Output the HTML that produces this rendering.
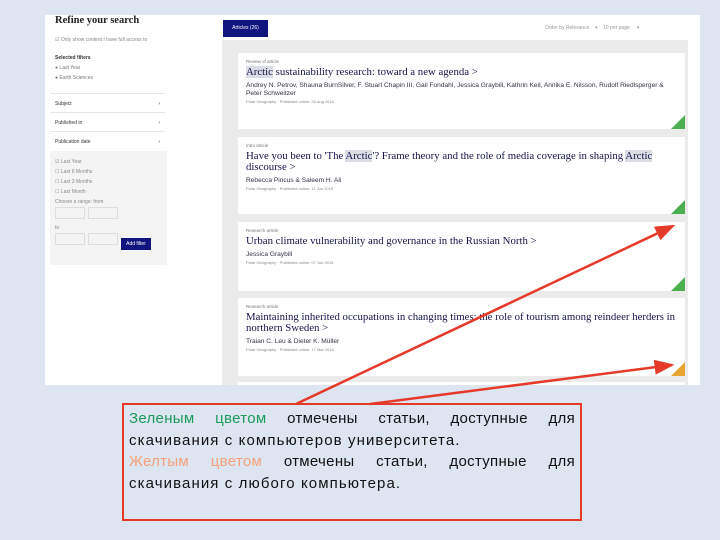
<!DOCTYPE html>
<html><head><meta charset="utf-8"><style>
*{margin:0;padding:0;box-sizing:border-box}
body{width:720px;height:540px;background:#dde5f1;position:relative;overflow:hidden;font-family:"Liberation Sans",sans-serif}
.shot{position:absolute;left:45px;top:15px;width:655px;height:370px;background:#fff;overflow:hidden}
.left{position:absolute;left:0;top:0;width:177px;height:370px;background:#fff;font-size:5px;color:#333}
.right{position:absolute;left:177px;top:25px;width:466px;height:345px;background:#ebebeb}
.tab{position:absolute;left:178px;top:5px;width:45px;height:17px;background:#10147e;color:#fff;font-size:5px;line-height:17px;text-align:center}
.card{position:absolute;left:193px;width:447px;background:#fff;padding:6px 8px;color:#1a1a5e}
.card .t{font-size:4.5px;color:#777}
.card h3{font-family:"Liberation Serif",serif;font-weight:normal;font-size:10.8px;color:#14144a;margin:3px 0 4px;line-height:11px}
.card .a{font-size:6.6px;color:#334;line-height:8px}
.card .m{font-size:4px;color:#888;margin-top:1px}
.hl{background:#dcdce4}
.tri{position:absolute;right:0;bottom:0;width:0;height:0;border-left:14px solid transparent;border-bottom:14px solid #4caf50}
.tri.y{border-bottom-color:#e8a531}
.box{position:absolute;left:122px;top:403px;width:460px;height:118px;border:2px solid #e5392a;padding:3px 5px;font-family:"Liberation Sans","DejaVu Sans",sans-serif;font-size:15px;letter-spacing:1.1px;line-height:21.5px;color:#111}
.j{text-align:justify;text-align-last:justify;white-space:nowrap;letter-spacing:0.3px}
.sel{height:12px;border:1px solid #ddd;display:inline-block;width:30px;margin-right:3px}
</style></head><body>
<div class="shot">
 <div class="left">
  <div style="position:absolute;left:10px;top:0px;font-family:'Liberation Serif',serif;font-weight:bold;font-size:10.5px;color:#222">Refine your search</div>
  <div style="position:absolute;left:10px;top:22px;color:#888">☑ Only show content I have full access to</div>
  <div style="position:absolute;left:10px;top:40px;font-weight:bold">Selected filters</div>
  <div style="position:absolute;left:10px;top:50px;color:#777">● Last Year</div>
  <div style="position:absolute;left:10px;top:60px;color:#777">● Earth Sciences</div>
  <div style="position:absolute;left:5px;top:78px;width:115px;border-top:1px solid #e6e6e6;padding:7px 5px">Subject<span style="float:right">›</span></div>
  <div style="position:absolute;left:5px;top:97px;width:115px;border-top:1px solid #e6e6e6;padding:7px 5px">Published in<span style="float:right">›</span></div>
  <div style="position:absolute;left:5px;top:116px;width:115px;border-top:1px solid #e6e6e6;padding:7px 5px">Publication date<span style="float:right">›</span></div>
  <div style="position:absolute;left:5px;top:136px;width:117px;height:114px;background:#f4f4f4;padding:6px 5px;color:#888;line-height:10px">
   ☑ Last Year<br>☐ Last 6 Months<br>☐ Last 3 Months<br>☐ Last Month<br>Choose a range: from<br>
   <span class="sel"></span><span class="sel"></span><br>to<br>
   <span class="sel"></span><span class="sel"></span><span style="display:inline-block;width:30px;height:12px;background:#10147e;color:#fff;text-align:center;line-height:12px">Add filter</span>
  </div>
 </div>
 <div style="position:absolute;left:177px;top:0;width:466px;height:25px;background:#fff"></div>
 <div class="right"></div>
 <div class="tab">Articles (26)</div>
 <div style="position:absolute;left:500px;top:10px;font-size:5px;color:#999">Order by Relevance &nbsp;&nbsp; ▾ &nbsp;&nbsp; 10 per page &nbsp;&nbsp;&nbsp; ▾</div>
 <div class="card" style="top:38px;height:76px"><div class="t">Review of article</div><h3><span class="hl">Arctic</span> sustainability research: toward a new agenda &gt;</h3><div class="a">Andrey N. Petrov, Shauna BurnSilver, F. Stuart Chapin III, Gail Fondahl, Jessica Graybill, Kathrin Keil, Annika E. Nilsson, Rudolf Riedlsperger &amp; Peter Schweitzer</div><div class="m">Polar Geography · Published online: 25 Aug 2016</div><div class="tri"></div></div>
 <div class="card" style="top:122px;height:77px"><div class="t">Intro article</div><h3>Have you been to 'The <span class="hl">Arctic</span>'? Frame theory and the role of media coverage in shaping <span class="hl">Arctic</span> discourse &gt;</h3><div class="a">Rebecca Pincus &amp; Saleem H. Ali</div><div class="m">Polar Geography · Published online: 11 Jun 2016</div><div class="tri"></div></div>
 <div class="card" style="top:207px;height:69px"><div class="t">Research article</div><h3>Urban climate vulnerability and governance in the Russian North &gt;</h3><div class="a">Jessica Graybill</div><div class="m">Polar Geography · Published online: 07 Jun 2016</div><div class="tri"></div></div>
 <div class="card" style="top:283px;height:78px"><div class="t">Research article</div><h3>Maintaining inherited occupations in changing times: the role of tourism among reindeer herders in northern Sweden &gt;</h3><div class="a">Traian C. Leu &amp; Dieter K. Müller</div><div class="m">Polar Geography · Published online: 17 Mar 2016</div><div class="tri y"></div></div>
 <div class="card" style="top:367px;height:10px"></div>
</div>
<svg style="position:absolute;left:0;top:0" width="720" height="540">
<defs><marker id="ah" markerWidth="8" markerHeight="6" refX="7" refY="3" orient="auto"><path d="M0,0 L8,3 L0,6 Z" fill="#e5392a"/></marker></defs>
<line x1="296" y1="404" x2="673" y2="226" stroke="#e5392a" stroke-width="2.5" marker-end="url(#ah)"/>
<line x1="370" y1="404" x2="672" y2="365" stroke="#e5392a" stroke-width="2.5" marker-end="url(#ah)"/>
</svg>
<div class="box">
<div class="j"><span style="color:#1d9a5a">Зеленым цветом</span> отмечены статьи, доступные для</div>
<div>скачивания с компьютеров университета.</div>
<div class="j"><span style="color:#f5a07a">Желтым цветом</span> отмечены статьи, доступные для</div>
<div>скачивания с любого компьютера.</div>
</div>
</body></html>
